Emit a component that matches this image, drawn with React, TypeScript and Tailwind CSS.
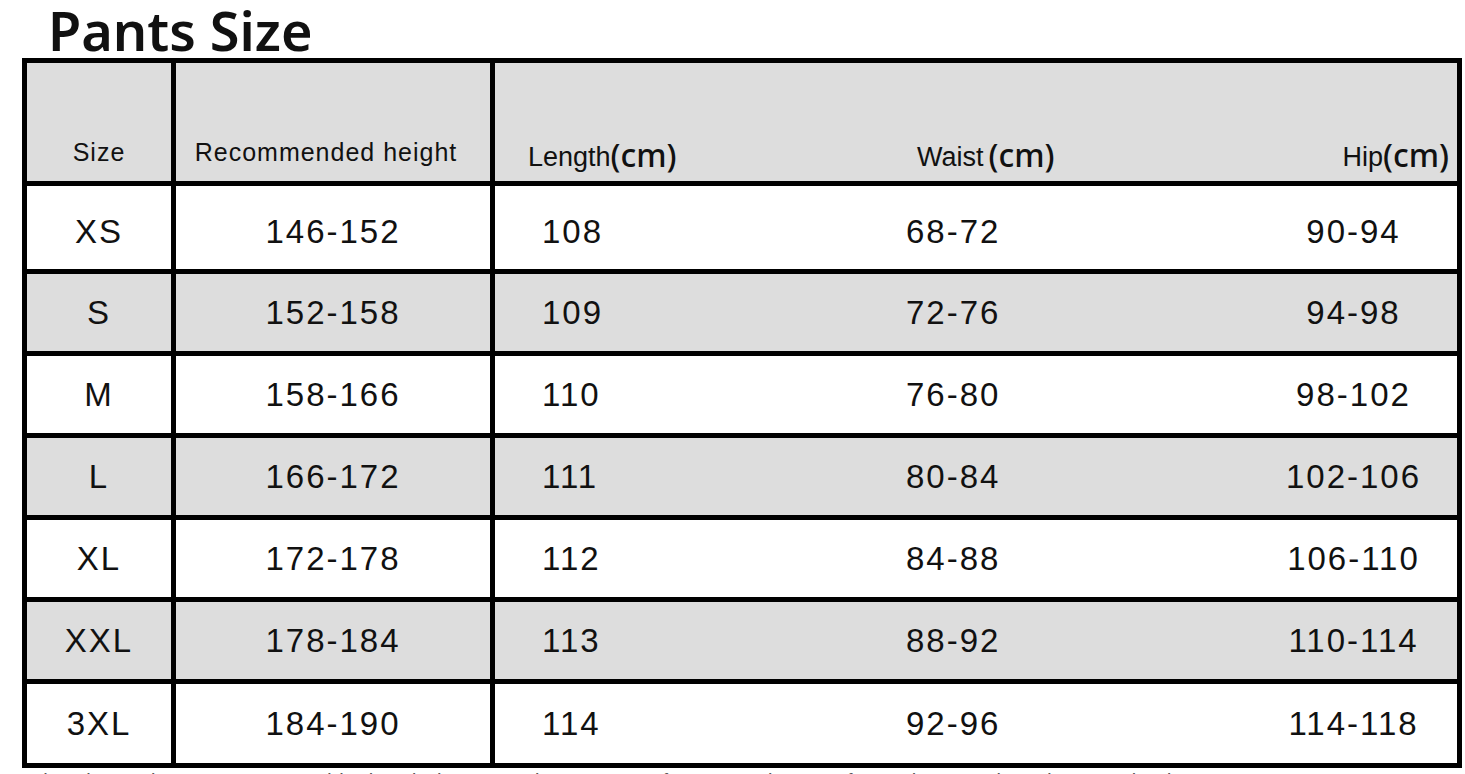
const rows = [
  { size: "XS", height: "146-152", length: "108", waist: "68-72", hip: "90-94" },
  { size: "S", height: "152-158", length: "109", waist: "72-76", hip: "94-98" },
  { size: "M", height: "158-166", length: "110", waist: "76-80", hip: "98-102" },
  { size: "L", height: "166-172", length: "111", waist: "80-84", hip: "102-106" },
  { size: "XL", height: "172-178", length: "112", waist: "84-88", hip: "106-110" },
  { size: "XXL", height: "178-184", length: "113", waist: "88-92", hip: "110-114" },
  { size: "3XL", height: "184-190", length: "114", waist: "92-96", hip: "114-118" },
];

const cols = "grid grid-cols-[149px_319px_385px_370px_1fr]";

function Unit() {
  return (
    <span className="font-['Noto_Sans',sans-serif] text-[32px] font-medium leading-none">
      (cm)
    </span>
  );
}

export default function App() {
  return (
    <div className="w-[1465px] h-[774px] overflow-hidden bg-white text-[#111] font-['Liberation_Sans',Arial,sans-serif]">
      <h1 className="ml-[48px] pt-[2px] font-['Noto_Sans',sans-serif] text-[54px] font-semibold leading-[56px]">
        Pants Size
      </h1>

      <div className="ml-[22px] w-[1440px] border-[5px] border-black">
        {/* header */}
        <div className={`${cols} h-[118px] bg-[#dddddd] text-[25px] tracking-[1px]`}>
          <div className="flex items-end justify-center pb-[10px] border-r-[5px] border-black">
            Size
          </div>
          <div className="flex items-end justify-center pb-[10px] pr-[14px] border-r-[5px] border-black">
            Recommended height
          </div>
          <div className="flex items-end pl-[33px] pb-[10px] tracking-normal">
            <span className="text-[27px] leading-none">Length</span>
            <Unit />
          </div>
          <div className="flex items-end pl-[37px] pb-[10px] tracking-normal">
            <span className="text-[27px] leading-none mr-[5px]">Waist</span>
            <Unit />
          </div>
          <div className="flex items-end justify-end pr-[8px] pb-[10px] tracking-normal">
            <span className="text-[27px] leading-none">Hip</span>
            <Unit />
          </div>
        </div>

        {rows.map((r, i) => (
          <div
            key={r.size}
            className={`${cols} border-t-[5px] border-black text-[33px] tracking-[2px] ${
              i % 2 === 1 ? "bg-[#dddddd]" : "bg-white"
            } ${i === 0 ? "h-[88px]" : i === 6 ? "h-[84px]" : "h-[82px]"}`}
          >
            <div className={`flex items-center justify-center border-r-[5px] border-black ${i === 0 ? "pt-[8px]" : ""}`}>
              {r.size}
            </div>
            <div className={`flex items-center justify-center border-r-[5px] border-black ${i === 0 ? "pt-[8px]" : ""}`}>
              {r.height}
            </div>
            <div className={`flex items-center pl-[47px] ${i === 0 ? "pt-[8px]" : ""}`}>{r.length}</div>
            <div className={`flex items-center pl-[26px] ${i === 0 ? "pt-[8px]" : ""}`}>{r.waist}</div>
            <div className={`flex items-center justify-center ${i === 0 ? "pt-[8px]" : ""}`}>{r.hip}</div>
          </div>
        ))}
      </div>

      <div className="h-[8px] overflow-hidden pl-[30px]">
        <p className="mt-[-1px] text-[20px] leading-[28px] text-[#555] tracking-[1px] whitespace-nowrap">
          The above sizes are measured by hand, there may be an error of 1-3 cm, please refer to the actual product received.
        </p>
      </div>
    </div>
  );
}
